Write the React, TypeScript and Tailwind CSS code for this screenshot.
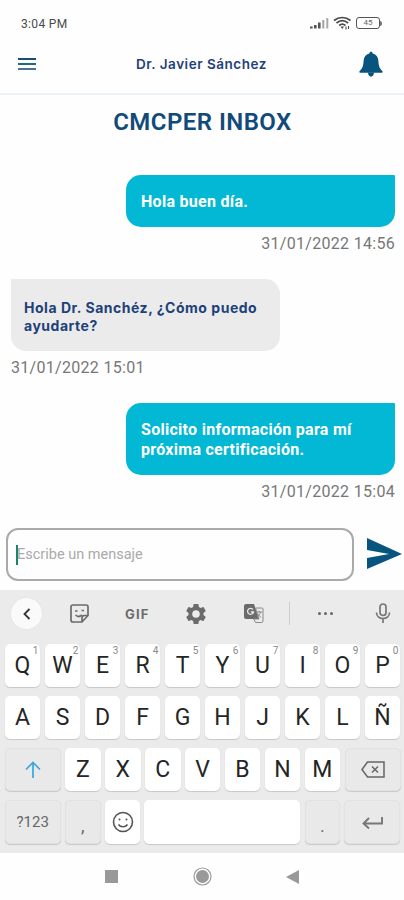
import type { ReactNode } from 'react'
import clsx from 'clsx'

const numbers = ['1', '2', '3', '4', '5', '6', '7', '8', '9', '0']

function StatusBar() {
    return (
        <div className="flex h-[46px] items-center justify-between pl-[21px] pr-[22px] text-[#4a4a4a]">
            <span className="pt-[2px] text-[12px] tracking-[0.35px]">3:04 PM</span>
            <div className="flex items-center">
                <svg width="19" height="12" viewBox="0 0 19 12" fill="#555">
                    <rect x="0" y="9.5" width="2.6" height="2" />
                    <rect x="4" y="8" width="2.6" height="3.5" />
                    <rect x="8" y="5.5" width="2.6" height="6" />
                    <rect x="12.3" y="3" width="2" height="8.5" opacity=".55" />
                    <rect x="16.3" y="1" width="2" height="10.5" opacity=".5" />
                </svg>
                <svg className="ml-[4px]" width="19" height="14" viewBox="0 0 19 14" fill="none" stroke="#4a4a4a" strokeWidth="1.7">
                    <path d="M1 4.5c5-4 11.500-4 16.500 0M3.500 7c3.600-2.900 8-2.900 11.600 0M6.200 9.500c2-1.700 4.300-1.700 6.200 0" />
                    <path d="m7.500 10.500 1.800 2.500 1.700-2.500z" fill="#4a4a4a" stroke="none" />
                    <path d="M13 10.500v3M15.500 10v3" strokeWidth="1.100" />
                </svg>
                <div className="ml-[4px] flex h-[12px] w-[24px] items-center justify-center rounded-[3px] border-[1.5px] border-[#555] text-[8px] text-[#666]">
                    45
                </div>
                <span className="h-[5px] w-[2px] rounded-r bg-[#777]" />
            </div>
        </div>
    )
}

function Header() {
    return (
        <header className="flex h-[49px] items-start justify-between border-b-2 border-[#edf2f6] pl-[18px] pr-[21px]">
            <div className="mt-[12px] flex w-[26px] flex-col gap-[3px]">
                <span className="h-[2px] w-[18px] bg-[#154e79]" />
                <span className="h-[2px] w-[18px] bg-[#236783]" />
                <span className="h-[2px] w-[18px] bg-[#4d718f]" />
            </div>
            <h1 className="mt-[8px] w-[131px] font-['Inter'] text-[13.5px] leading-[20px] font-semibold tracking-[0.52px] whitespace-nowrap text-[#1f4278]">
                Dr. Javier Sánchez
            </h1>
            <svg className="mt-[5px]" width="24" height="27" viewBox="0 0 24 27" fill="#07547f">
                <path d="M10.300 2.500C10.300.2 13.700.2 13.700 2.500c3.500.9 5.500 3.500 5.700 7.500.3 5.300 1.400 7.700 4.100 10.200.5.500.1 1.500-.6 1.500H1.100c-.7 0-1.100-1-.6-1.500 2.700-2.500 3.800-4.900 4.100-10.200.2-4 2.200-6.600 5.700-7.500z" />
                <path d="M9 21.500h6c0 5.500-6 5.500-6 0z" />
            </svg>
        </header>
    )
}

function Message({ mine, time, children }: { mine?: boolean; time: string; children: ReactNode }) {
    return (
        <div className={clsx('flex flex-col', mine ? 'items-end' : 'items-start')}>
            <div
                className={clsx(
                    'w-[269px] rounded-[15px]',
                    mine
                        ? 'rounded-tr-[1px] bg-[#03b8d4] px-[15px] pt-[17px] pb-[15px] text-[16px] leading-[20px] font-bold tracking-[0.28px] text-white'
                        : "rounded-tl-[1px] bg-[#ebebeb] px-[13px] pt-[20px] pb-[17px] font-['Inter'] text-[14px] leading-[17.500px] font-bold tracking-[0.52px] text-[#1d4179]"
                )}
            >
                {children}
            </div>
            <time className="mt-[7px] -mb-px text-[16px] leading-[20px] tracking-[0.3px] text-[#777]">{time}</time>
        </div>
    )
}

function Key({ label, hint, className }: { label: ReactNode; hint?: string; className?: string }) {
    return (
        <div
            className={clsx(
                'relative flex h-full items-center justify-center rounded-[5px] text-[23px] text-[#252525] shadow-[0_1px_1px_#c7c7c7]',
                className ?? 'w-[35.700px] bg-white'
            )}
        >
            {typeof label === 'string' ? <span className="pt-[2px]">{label}</span> : label}
            {hint && <span className="absolute top-[1px] right-[2px] text-[10px] leading-[12px] text-[#888]">{hint}</span>}
        </div>
    )
}

function Toolbar() {
    return (
        <div className="flex h-[54px] items-start pt-[8px] pl-[11px] text-[#6b6b6b]">
            <div className="flex h-[31px] w-[31px] items-center justify-center rounded-full bg-[#fafafa] shadow-[0_0_2px_#ddd]">
                <svg width="10" height="14" viewBox="0 0 10 14" fill="none" stroke="#333" strokeWidth="1.800">
                    <path d="M7.500 2 2.500 7l5 5" />
                </svg>
            </div>
            <svg className="mt-[6px] ml-[28px]" width="19" height="19" viewBox="0 0 19 19" fill="none" stroke="currentColor" strokeWidth="1.700">
                <path d="M3 1h13q2 0 2 2v8.500L12 18H3q-2 0-2-2V3q0-2 2-2zM12 18v-4q0-2.500 2.500-2.500H18" />
                <path d="M5 7h2.500M11.500 6.500H14M5.500 11q3 3 6.500 0" />
            </svg>
            <span className="mt-[7px] ml-[36px] w-[26px] font-['Inter'] text-[13px] leading-[18px] font-bold tracking-[1.2px]">GIF</span>
            <svg className="mt-[6px] ml-[35px]" width="20" height="20" viewBox="2 2 20 20" fill="currentColor">
                <path
                    fillRule="evenodd"
                    d="M19.430 12.980c.04-.32.070-.64.070-.98s-.03-.66-.07-.98l2.110-1.650a.5.5 0 0 0 .12-.64l-2-3.460a.5.5 0 0 0-.61-.22l-2.490 1a7.300 7.300 0 0 0-1.690-.98l-.38-2.650A.49.49 0 0 0 14 2h-4a.49.49 0 0 0-.49.420l-.38 2.650c-.61.250-1.170.59-1.690.98l-2.490-1a.5.5 0 0 0-.61.220l-2 3.460a.5.5 0 0 0 .12.640l2.110 1.650a7.900 7.900 0 0 0 0 1.960l-2.110 1.650a.5.5 0 0 0-.12.640l2 3.460a.5.5 0 0 0 .61.220l2.490-1c.52.400 1.080.730 1.690.980l.38 2.650a.49.49 0 0 0 .49.420h4a.49.49 0 0 0 .49-.42l.38-2.650c.61-.25 1.170-.59 1.690-.98l2.490 1a.5.5 0 0 0 .61-.22l2-3.460a.5.5 0 0 0-.12-.64zM12 15.800a3.800 3.800 0 1 1 0-7.600 3.800 3.800 0 0 1 0 7.600z"
                />
            </svg>
            <svg className="mt-[6px] ml-[38px]" width="20" height="20" viewBox="0 0 20 20">
                <path d="M2 0h8l5 15H2q-2 0-2-2V2q0-2 2-2z" fill="#6b6b6b" />
                <path d="M9 5.500A3 3 0 1 0 9.500 8H6.800" fill="none" stroke="#ebebeb" strokeWidth="1.300" />
                <path d="M11.500 4H18q1 0 1 1v12q0 1.500-1.500 1.500h-6L9.800 15H15z" fill="#ebebeb" stroke="#888" strokeWidth="1" />
                <path d="M12 8h6M15 6.800V8m1.500 0c-.5 2-2 4-3.500 5M13.500 10l3.500 3.500" fill="none" stroke="#888" />
            </svg>
            <span className="mt-[4px] ml-[25px] h-[23px] w-px bg-[#ccc]" />
            <div className="mt-[14px] ml-[28px] flex gap-[3px]">
                <span className="h-[3px] w-[3px] rounded-full bg-[#666]" />
                <span className="h-[3px] w-[3px] rounded-full bg-[#666]" />
                <span className="h-[3px] w-[3px] rounded-full bg-[#666]" />
            </div>
            <svg className="mt-[5px] ml-[42px]" width="16" height="21" viewBox="0 0 16 21" fill="none" stroke="#777" strokeWidth="1.700">
                <rect x="5" y="1" width="6" height="11.500" rx="3" />
                <path d="M1.500 9.500c0 8 13 8 13 0M8 15.500V20" />
            </svg>
        </div>
    )
}

function Keyboard() {
    const grey = 'bg-[#e9e9e9] border border-[#e2e2e2]'
    return (
        <div className="h-[263px] bg-[#ebebeb]">
            <Toolbar />
            <div className="flex flex-col gap-[9px] pr-[3.500px] pl-[4.700px]">
                <div className="flex h-[43px] justify-between">
                    {'QWERTYUIOP'.split('').map((l, i) => (
                        <Key key={l} label={l} hint={numbers[i]} />
                    ))}
                </div>
                <div className="flex h-[43px] justify-between">
                    {'ASDFGHJKLÑ'.split('').map((l) => (
                        <Key key={l} label={l} />
                    ))}
                </div>
                <div className="flex h-[43px] justify-between">
                    <Key
                        className={clsx('w-[56px]', grey)}
                        label={
                            <svg width="16" height="17" viewBox="0 0 16 17" fill="none" stroke="#38a5df" strokeWidth="1.700">
                                <path d="M8 17V1.500M1 8.500l7-7 7 7" />
                            </svg>
                        }
                    />
                    {'ZXCVBNM'.split('').map((l) => (
                        <Key key={l} label={l} />
                    ))}
                    <Key
                        className={clsx('w-[56px]', grey)}
                        label={
                            <svg width="24" height="17" viewBox="0 0 24 17" fill="none" stroke="#666" strokeWidth="1.500">
                                <path d="M6.500 1H23v15H6.500L1 8.500zM11 5.500l6 6M17 5.500l-6 6" />
                            </svg>
                        }
                    />
                </div>
                <div className="flex h-[44px] justify-between">
                    <Key className={clsx('w-[56px]', grey)} label={<span className="text-[15px] text-[#666]">?123</span>} />
                    <Key className={clsx('w-[35.700px]', grey)} label={<span className="pt-[7px] text-[18px] text-[#666]">,</span>} />
                    <Key
                        label={
                            <svg width="22" height="22" viewBox="0 0 22 22" fill="none" stroke="#555" strokeWidth="1.600">
                                <circle cx="11" cy="11" r="9.500" />
                                <path d="M6.500 13.500c2 3 7 3 9 0" />
                                <circle cx="7.500" cy="8.500" r="1" fill="#555" stroke="none" />
                                <circle cx="14.500" cy="8.500" r="1" fill="#555" stroke="none" />
                            </svg>
                        }
                    />
                    <Key className="w-[156px] bg-white" label="" />
                    <Key className={clsx('w-[35.700px]', grey)} label={<span className="pt-[7px] text-[18px] text-[#777]">.</span>} />
                    <Key
                        className={clsx('w-[56px]', grey)}
                        label={
                            <svg width="21" height="13" viewBox="0 0 21 13" fill="none" stroke="#777" strokeWidth="1.900">
                                <path d="M20 1v6.500H2M7 2 1.500 7.500 7 12.500" />
                            </svg>
                        }
                    />
                </div>
            </div>
        </div>
    )
}

export default function App() {
    return (
        <div className="flex h-[900px] w-[404px] flex-col overflow-hidden bg-[#fefefe] font-['Roboto',sans-serif]">
            <StatusBar />
            <Header />
            <h2 className="mt-[13px] pl-px text-center text-[24px] leading-[28px] font-semibold tracking-[0.45px] text-[#114b7b]">CMCPER INBOX</h2>
            <main className="mt-[39px] flex h-[353px] flex-col gap-[26px] pr-[9px] pl-[11px]">
                <Message mine time="31/01/2022 14:56">
                    Hola buen día.
                </Message>
                <Message time="31/01/2022 15:01">Hola Dr. Sanchéz, ¿Cómo puedo ayudarte?</Message>
                <Message mine time="31/01/2022 15:04">
                    Solicito información para mí próxima certificación.
                </Message>
            </main>
            <div className="flex h-[62px] items-start pl-[6px]">
                <div className="flex h-[53px] w-[348px] items-center rounded-[12px] border-2 border-[#aaa] pl-[8px]">
                    <span className="h-[20px] w-[2px] bg-[#16856c]" />
                    <span className="-ml-px text-[14.5px] text-[#aaa]">Escribe un mensaje</span>
                </div>
                <svg className="mt-[10px] ml-[13px]" width="35" height="32" viewBox="0 0 35 32" fill="#07547f">
                    <path d="M0 0 35 16 0 31V20l22-4L0 12z" />
                </svg>
            </div>
            <Keyboard />
            <nav className="flex h-[47px] items-center pl-[105px]">
                <span className="h-[13px] w-[13px] bg-[#999]" />
                <svg className="ml-[75px]" width="19" height="19" viewBox="0 0 19 19">
                    <circle cx="9.500" cy="9.500" r="8.500" fill="none" stroke="#999" strokeWidth="1.200" />
                    <circle cx="9.500" cy="9.500" r="6.500" fill="#999" />
                </svg>
                <svg className="ml-[74px]" width="13" height="14" viewBox="0 0 13 14">
                    <path d="M13 0v14L0 7z" fill="#999" />
                </svg>
            </nav>
        </div>
    )
}
